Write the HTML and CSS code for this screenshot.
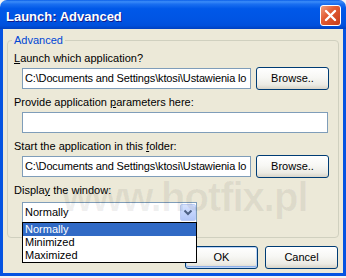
FILE: index.html
```html
<!DOCTYPE html>
<html lang="en">
<head>
    <meta charset="UTF-8">
    <meta name="viewport" content="width=device-width, initial-scale=1.0">
    <title>Launch: Advanced</title>
    <link rel="stylesheet" href="styles.css">
</head>
<body>
    <div class="window">
        <div class="titlebar">
            <span class="title">Launch: Advanced</span>
            <span class="close">
                <svg width="19" height="19" viewBox="0 0 19 19"><path d="M5 5 L14 14 M14 5 L5 14" stroke="#fff" stroke-width="2.4" stroke-linecap="round"/></svg>
            </span>
        </div>

        <div class="client">
            <fieldset class="group">
                <legend>Advanced</legend>

                <div class="field">
                    <div class="label"><u>L</u>aunch which application?</div>
                    <div class="row">
                        <div class="edit">C:\Documents and Settings\ktosi\Ustawienia lo</div>
                        <div class="btn">Browse..</div>
                    </div>
                </div>

                <div class="field">
                    <div class="label">Provide application <u>p</u>arameters here:</div>
                    <div class="row">
                        <div class="edit edit-wide"></div>
                    </div>
                </div>

                <div class="field">
                    <div class="label">Start the application in this <u>f</u>older:</div>
                    <div class="row">
                        <div class="edit">C:\Documents and Settings\ktosi\Ustawienia lo</div>
                        <div class="btn">Browse..</div>
                    </div>
                </div>

                <div class="field">
                    <div class="label">Displa<u>y</u> the window:</div>
                    <div class="combo">
                        <div class="combo-value">Normally</div>
                        <div class="combo-arrow">
                            <svg width="16" height="17" viewBox="0 0 16 17"><polyline points="4.5,6.5 8,10 11.5,6.5" fill="none" stroke="#4d6185" stroke-width="2"/></svg>
                        </div>
                        <ul class="combo-list">
                            <li class="selected">Normally</li>
                            <li>Minimized</li>
                            <li>Maximized</li>
                        </ul>
                    </div>
                </div>
            </fieldset>

            <div class="actions">
                <div class="btn btn-default">OK</div>
                <div class="btn">Cancel</div>
            </div>
        </div>

        <div class="watermark">www.hotfix.pl</div>
    </div>
</body>
</html>
```

FILE: styles.css
```css
body {
    margin: 0;
    background: #f4f4f4;
    font-family: "Liberation Sans", Arial, sans-serif;
    font-size: 11px;
    color: #000;
}
.window {
    position: relative;
    width: 346px;
    height: 276px;
    display: flex;
    flex-direction: column;
}
.titlebar {
    height: 29px;
    flex: none;
    box-sizing: border-box;
    padding: 4px 5px 0 6px;
    display: flex;
    align-items: center;
    justify-content: space-between;
    border-radius: 7px 7px 0 0;
    background: linear-gradient(to bottom, #0a5ee8 0%, #3b8cf8 6%, #1a6ff0 14%, #0058e8 30%, #0054e3 70%, #0050dc 88%, #0040c0 100%);
}
.title {
    color: #fff;
    font-weight: bold;
    font-size: 13px;
    line-height: 15px;
    text-shadow: 1px 1px 0 #0f1a8a;
}
.close {
    width: 21px;
    height: 21px;
    margin-top: -2px;
    box-sizing: border-box;
    border: 1px solid #fff;
    border-radius: 3px;
    display: flex;
    align-items: center;
    justify-content: center;
    background: linear-gradient(135deg, #f0a080 0%, #e35d34 40%, #c63c18 100%);
}
.client {
    flex: 1;
    display: flex;
    flex-direction: column;
    background: #ece9d8;
    border: 3px solid #0553e1;
    border-top: 0;
    padding: 5px 4px 4px 4px;
}
.group {
    margin: 0;
    padding: 5px 9px 14px 6px;
    min-width: 0;
    border: 1px solid #d0d0bf;
    border-radius: 4px;
}
.group legend {
    padding: 0 2px;
    margin-left: -2px;
    color: #0046d5;
    line-height: 13px;
}
.field {
    margin-bottom: 6px;
}
.field:last-child {
    margin-bottom: 0;
}
.label {
    line-height: 13px;
    height: 13px;
    white-space: nowrap;
}
.row {
    display: flex;
    align-items: center;
    gap: 5px;
    height: 23px;
    margin-top: 2px;
    padding-left: 8px;
}
.edit {
    flex: 1;
    min-width: 0;
    height: 21px;
    box-sizing: border-box;
    border: 1px solid #7f9db9;
    background: #fff;
    padding: 0 1px 0 2px;
    line-height: 19px;
    letter-spacing: -0.15px;
    white-space: nowrap;
    overflow: hidden;
}
.edit-wide {
    margin-right: 1px;
}
.btn {
    flex: none;
    width: 73px;
    height: 23px;
    box-sizing: border-box;
    border: 1px solid #003c74;
    border-radius: 3px;
    text-align: center;
    line-height: 21px;
    background: linear-gradient(to bottom, #ffffff 0%, #f7f7f4 45%, #ecebe4 80%, #d8d4c8 100%);
}
.btn-default {
    box-shadow: inset 0 0 0 1px #bcd4f6, inset 0 -1px 0 1px #8fb0e8;
}
.combo {
    position: relative;
    display: flex;
    width: 175px;
    height: 21px;
    box-sizing: border-box;
    margin: 5px 0 0 8px;
    border: 1px solid #7f9db9;
    background: #fff;
}
.combo-value {
    flex: 1;
    padding: 0 2px;
    line-height: 19px;
}
.combo-arrow {
    width: 16px;
    height: 17px;
    margin: 1px 0;
    box-sizing: border-box;
    border-radius: 2px;
    border: 1px solid #bccdf7;
    background: linear-gradient(to bottom, #d6e2fd 0%, #c3d4fc 50%, #b3c7f8 100%);
    display: flex;
    align-items: center;
    justify-content: center;
}
.combo-arrow svg {
    display: block;
    margin: -1px;
}
.combo-list {
    position: absolute;
    top: 100%;
    left: -1px;
    width: 175px;
    box-sizing: border-box;
    margin: 0;
    padding: 0;
    list-style: none;
    border: 1px solid #000;
    background: #fff;
    z-index: 2;
}
.combo-list li {
    padding: 0 2px;
    line-height: 13px;
    height: 13px;
}
.combo-list .selected {
    background: #316ac5;
    color: #fff;
}
.actions {
    display: flex;
    justify-content: flex-end;
    gap: 7px;
    margin: 8px 1px 0 0;
}
.watermark {
    position: absolute;
    left: 62px;
    top: 175px;
    font-size: 40px;
    font-weight: bold;
    letter-spacing: -1px;
    color: rgba(0, 0, 0, 0.06);
    pointer-events: none;
    z-index: 1;
}
```
